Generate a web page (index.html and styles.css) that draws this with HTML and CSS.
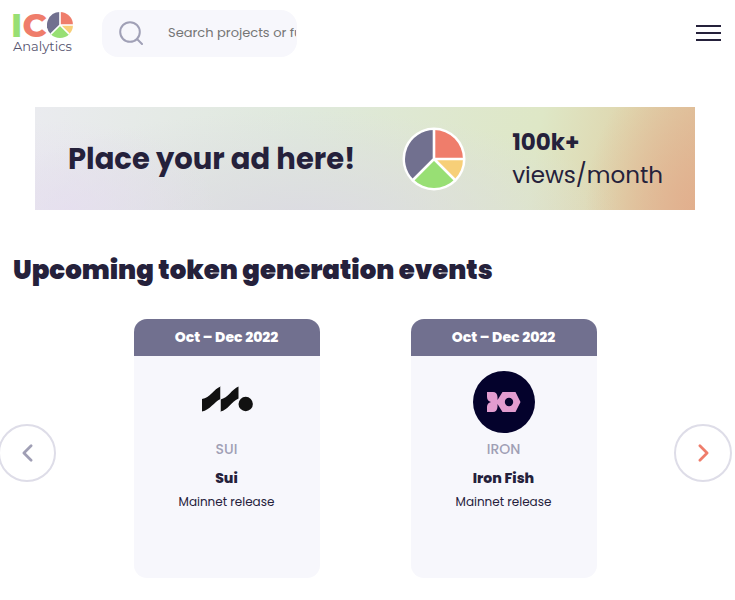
FILE: index.html
```html
<!DOCTYPE html>
<html lang="en">
<head>
    <meta charset="UTF-8">
    <meta name="viewport" content="width=device-width, initial-scale=1.0">
    <title>ICO Analytics</title>
    <link rel="stylesheet" href="styles.css">
</head>
<body>
    <header class="header">
        <a class="logo" href="#">
            <span class="logo-top">
                <span class="logo-i">I</span><span class="logo-c">C</span>
                <svg class="logo-pie" viewBox="-32 -32 64 64" aria-hidden="true">
                    <circle r="32" fill="#fff"/>
                    <path d="M0 0V-32A32 32 0 0 1 32 0Z" fill="#ef7d6b"/>
                    <path d="M0 0H32A32 32 0 0 1 22.6 22.6Z" fill="#f7cf78"/>
                    <path d="M0 0L22.6 22.6A32 32 0 0 1-22.6 22.6Z" fill="#98df74"/>
                    <path d="M0 0L-22.6 22.6A32 32 0 0 1 0-32Z" fill="#71708f"/>
                    <path d="M0-32V0H32M0 0L22.6 22.6M0 0L-22.6 22.6" fill="none" stroke="#fff" stroke-width="4"/>
                </svg>
            </span>
            <span class="logo-name">Analytics</span>
        </a>

        <form class="search">
            <svg class="search-icon" viewBox="0 0 24 24" aria-hidden="true">
                <circle cx="11" cy="11" r="9.8"/>
                <path d="M18 18L23 23"/>
            </svg>
            <label class="hidden" for="search">Search</label>
            <input id="search" type="text" placeholder="Search projects or funds">
        </form>

        <button class="menu" type="button" aria-label="Menu">
            <svg viewBox="0 0 25 18" aria-hidden="true">
                <path d="M0 2H25M0 9H25M0 16H25"/>
            </svg>
        </button>
    </header>

    <main>
        <!-- Ad -->
        <a class="banner" href="#">
            <span class="banner-title">Place your ad here!</span>
            <svg class="banner-pie" viewBox="-32 -32 64 64" aria-hidden="true">
                <circle r="31.5" fill="#fff"/>
                <path d="M0 0V-29A29 29 0 0 1 29 0Z" fill="#ef7d6b"/>
                <path d="M0 0H29A29 29 0 0 1 20.5 20.5Z" fill="#f7cf78"/>
                <path d="M0 0L20.5 20.5A29 29 0 0 1-20.5 20.5Z" fill="#98df74"/>
                <path d="M0 0L-20.5 20.5A29 29 0 0 1 0-29Z" fill="#71708f"/>
                <path d="M0-30V0H30M0 0L21 21M0 0L-21 21" fill="none" stroke="#fff" stroke-width="2.6"/>
            </svg>
            <span class="banner-stats"><b>100k+</b><span>views/month</span></span>
        </a>

        <h1>Upcoming token generation events</h1>

        <!-- Carousel -->
        <section class="carousel">
            <button class="arrow" type="button" aria-label="Previous">
                <svg viewBox="0 0 12 20" aria-hidden="true"><path d="M10 2L2 10L10 18"/></svg>
            </button>

            <div class="slides">
                <article class="card">
                    <div class="card-date">Oct – Dec 2022</div>
                    <svg class="card-logo" viewBox="0 0 62 62" aria-hidden="true">
                        <path fill="#111" d="M6 28C14 27 18 18 24.500 15.500V28.500C32 27 36 18 42.500 15.500V27.500C35 31 32 39 24.500 40.500V28C18 31 14 39 6 40.500Z"/>
                        <path d="M24.500 16V40" stroke="#f7f7fc" stroke-width=".5"/>
                        <circle cx="49.700" cy="33" r="7.200" fill="#111"/>
                    </svg>
                    <div class="card-ticker">SUI</div>
                    <h2>Sui</h2>
                    <p>Mainnet release</p>
                </article>

                <article class="card">
                    <div class="card-date">Oct – Dec 2022</div>
                    <svg class="card-logo" viewBox="0 0 62 62" aria-hidden="true">
                        <circle cx="31" cy="31" r="31" fill="#04022c"/>
                        <path fill="#e29ccf" d="M14 21H20Q24 21 24.500 26V29L29.500 21H42.500L47.500 31L42.500 41H29.500L24.500 33V36Q24 41 20 41H14V36Q14 32 18 31Q14 30 14 26Z"/>
                        <circle cx="36" cy="31" r="4.200" fill="#04022c"/>
                    </svg>
                    <div class="card-ticker">IRON</div>
                    <h2>Iron Fish</h2>
                    <p>Mainnet release</p>
                </article>
            </div>

            <button class="arrow arrow-next" type="button" aria-label="Next">
                <svg viewBox="0 0 12 20" aria-hidden="true"><path d="M2 2L10 10L2 18"/></svg>
            </button>
        </section>
    </main>
</body>
</html>
```
FILE: styles.css
```css
* { box-sizing: border-box; }
body {
    margin: 0;
    padding-right: 5px;
    font-family: Poppins, Inter, sans-serif;
    background-color: #fff;
    color: #25213b;
    overflow-x: hidden;
}
button {
    padding: 0;
    background: none;
    border: none;
    cursor: pointer;
}
a {
    color: inherit;
    text-decoration: none;
}
.header {
    display: flex;
    align-items: center;
    height: 66px;
    padding: 0 9px 0 13px;
}
.logo {
    width: 60px;
    margin-right: 29px;
    font-family: Montserrat, Inter, sans-serif;
}
.logo-top {
    display: flex;
    align-items: center;
    justify-content: space-between;
    height: 26px;
    margin-left: -2px;
    font-size: 33px;
    font-weight: 800;
    line-height: 26px;
}
.logo-i { color: #98df74; }
.logo-c { color: #ef7d6b; }
.logo-pie {
    flex: none;
    width: 26px;
    height: 26px;
}
.logo-name {
    display: block;
    font-size: 13px;
    font-weight: 400;
    line-height: 16px;
    color: #56546f;
}
.search {
    display: flex;
    align-items: center;
    gap: 25px;
    width: 195px;
    height: 47px;
    padding: 0 1px 0 17px;
    background-color: #f7f7fc;
    border-radius: 16px;
}
.search-icon {
    flex: none;
    width: 24px;
    height: 24px;
    fill: none;
    stroke: #a0a0b6;
    stroke-width: 2;
    stroke-linecap: round;
}
.search input {
    flex: 1;
    min-width: 0;
    padding: 0;
    border: none;
    background: none;
    font-family: inherit;
    font-size: 13px;
    color: #25213b;
    outline: none;
}
.search input::placeholder { color: #757575; }
.hidden {
    position: absolute;
    width: 1px;
    height: 1px;
    overflow: hidden;
    clip-path: inset(50%);
}
.menu {
    margin-left: auto;
}
.menu svg {
    display: block;
    width: 25px;
    height: 18px;
    stroke: #25213b;
    stroke-width: 2;
}
.banner {
    display: flex;
    align-items: center;
    justify-content: space-between;
    height: 103px;
    margin: 41px 35px 0;
    padding: 0 32px 0 33px;
    background:
        radial-gradient(ellipse 110px 150px at 100% 100%, rgba(226, 173, 140, .9), rgba(226, 173, 140, 0)),
        radial-gradient(ellipse 150px 90px at 5% 100%, rgba(230, 222, 240, .8), rgba(230, 222, 240, 0)),
        radial-gradient(ellipse 330px 110px at 40% 110%, rgba(220, 219, 226, 1), rgba(220, 219, 226, 0)),
        linear-gradient(100deg, #eaebef, #dfe9dc 40%, #dee7c6 75%, #dfd6ae 88%, #dfc09a);
}
.banner-title {
    font-size: 29px;
    font-weight: 700;
    line-height: 40px;
}
.banner-pie {
    width: 64px;
    height: 64px;
}
.banner-stats {
    display: flex;
    flex-direction: column;
    font-size: 23px;
    line-height: 33px;
}
h1 {
    margin: 40px 13px 0;
    font-size: 26px;
    font-weight: 900;
    line-height: 40px;
}
.carousel {
    display: flex;
    align-items: center;
    margin: 29px -2px 0;
}
.arrow {
    display: flex;
    flex: none;
    align-items: center;
    justify-content: center;
    width: 58px;
    height: 58px;
    margin-top: 8px;
    border: 2px solid #dedde8;
    border-radius: 50%;
}
.arrow svg {
    width: 11px;
    height: 18px;
    fill: none;
    stroke: #a09fb5;
    stroke-width: 3;
    stroke-linecap: round;
    stroke-linejoin: round;
}
.arrow-next svg { stroke: #ef7d6b; }
.slides {
    display: grid;
    grid-template-columns: 1fr 1fr;
    flex: 1;
    padding: 0 32px;
}
.card {
    display: flex;
    flex-direction: column;
    align-items: center;
    justify-self: center;
    width: 186px;
    padding-bottom: 66px;
    background-color: #f7f7fc;
    border-radius: 13px;
    overflow: hidden;
    text-align: center;
}
.card-date {
    width: 100%;
    background-color: #71708f;
    color: #fff;
    font-size: 14px;
    font-weight: 800;
    line-height: 37px;
}
.card-logo {
    width: 62px;
    height: 62px;
    margin: 15px 0 6px;
}
.card-ticker {
    font-size: 14px;
    font-weight: 500;
    line-height: 20px;
    color: #a09fb5;
}
.card h2 {
    margin: 9px 0 4px;
    font-size: 14px;
    font-weight: 800;
    line-height: 20px;
}
.card p {
    margin: 0;
    font-size: 12px;
    line-height: 20px;
}
```
